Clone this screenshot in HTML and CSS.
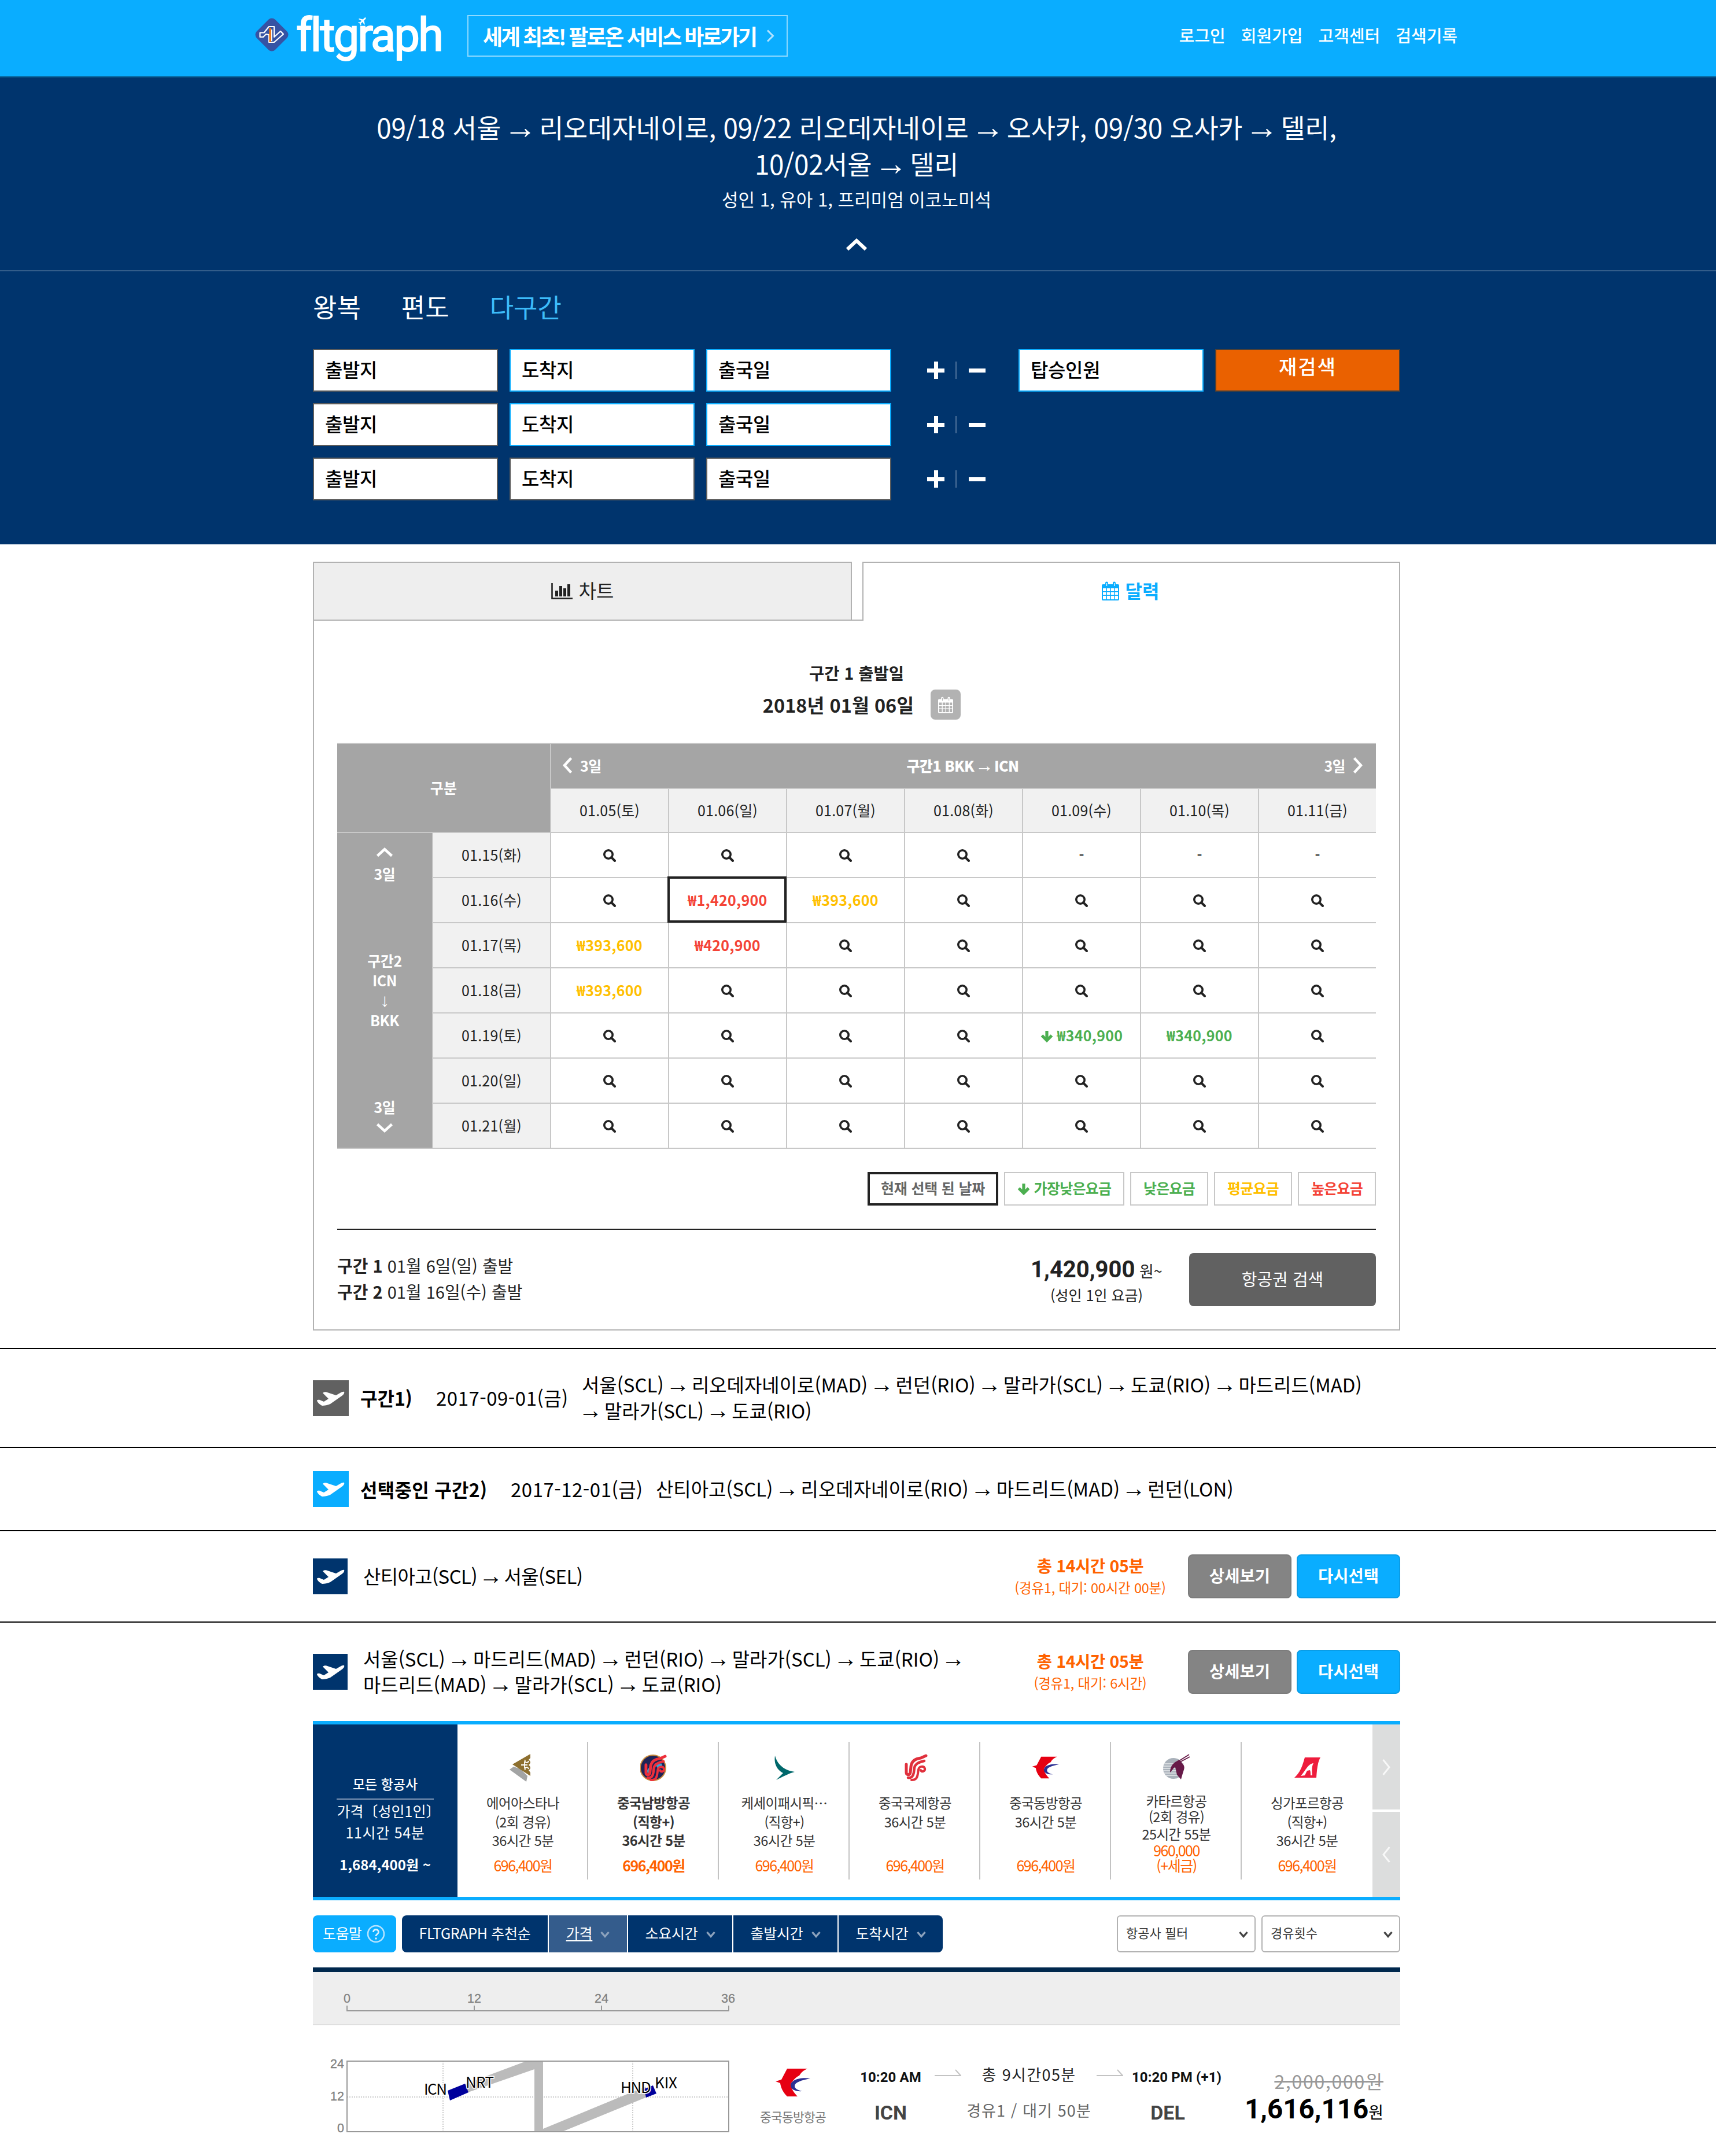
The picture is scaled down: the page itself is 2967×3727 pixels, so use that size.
FILE: index.html
```html
<!DOCTYPE html>
<html lang="ko">
<head>
<meta charset="utf-8">
<title>fltgraph</title>
<link rel="stylesheet" href="styles.css">
</head>
<body>
<svg class="defs" width="0" height="0">
  <symbol id="search" viewBox="0 0 22 22"><circle cx="9" cy="9" r="7.200" fill="none" stroke="currentColor" stroke-width="3.600"/><path d="M14 14l6 6" stroke="currentColor" stroke-width="4" stroke-linecap="round"/></symbol>
  <symbol id="chev" viewBox="0 0 30 18"><path d="M2.500 15.500L15 4l12.500 11.500" fill="none" stroke="currentColor" stroke-width="4.500"/></symbol>
  <symbol id="caret" viewBox="0 0 16 12"><path d="M1.500 2L8 9.500 14.500 2" fill="none" stroke="currentColor" stroke-width="3.400"/></symbol>
  <symbol id="down" viewBox="0 0 22 20"><path d="M11 0v15M2.500 8L11 16.500 19.500 8" fill="none" stroke="currentColor" stroke-width="5.200"/></symbol>
  <symbol id="cal" viewBox="0 0 30 33"><path fill="currentColor" fill-rule="evenodd" d="M2 5h4V3a2.500 2.500 0 0 1 5 0v2h8V3a2.500 2.500 0 0 1 5 0v2h4a2 2 0 0 1 2 2v24a2 2 0 0 1-2 2H2a2 2 0 0 1-2-2V7a2 2 0 0 1 2-2zM2 12v5h5.500v-5zM9 12v5h5.500v-5zM16 12v5h5.500v-5zM23 12v5h5v-5zM2 18.500v5h5.500v-5zM9 18.500v5h5.500v-5zM16 18.500v5h5.500v-5zM23 18.500v5h5v-5zM2 25v6h5.500v-6zM9 25v6h5.500v-6zM16 25v6h5.500v-6zM23 25v6h5v-6zM8 3v5h1.200V3zM21 3v5h1.200V3z"/></symbol>
  <symbol id="plane" viewBox="0 0 62 62"><path fill="#fff" d="M7 35c2-2 5-1 7 0l5 2 8-5-10-10c2-2 6-2 8-1l15 5 7-4c3-2 6-2.500 7-2 1 2-1 5-4 7L30 41c-4 2-10 3-14 3-4-2-8-5-9-9z"/></symbol>
  <symbol id="eastern" viewBox="0 0 60 50"><path fill="#e60012" d="M20 1h35c-7 3-11 7-14 12-5 2-12 9-15 15 1 8 6 15 12 21H20C12 41 9 33 8 26L0 23l10-3z"/><path fill="#2b2f92" d="M60 18c-16 3-27 7-27 13 0 4 4 7 13 9-11 1-20-3-20-10 0-9 16-15 34-12z"/></symbol>
  <symbol id="phoenix" viewBox="0 0 42 48"><g fill="none" stroke="currentColor" stroke-linecap="round"><path stroke-width="5" d="M5 18v14c0 5 6 5 7 0l1-10C14 12 22 8 30 7l9-4"/><path stroke-width="4.500" d="M8 41c7 1 9-3 10-9l1-8c1-7 7-10 17-12"/><path stroke-width="4" d="M14 45c8 0 10-4 11-11l1-7c1-6 9-7 11-2 1 5-5 7-7 3"/></g></symbol>
</svg>

<header class="top">
  <div class="top-in">
    <svg class="mark" viewBox="0 0 60 60"><rect x="7.500" y="7.500" width="45" height="45" rx="8" transform="rotate(45 30 30)" fill="#3653a4"/><path d="M9.500 26.500h7L25 16h9v18l11-10 5 5-16 14H25V30l-5-1-5 5H9.500zM29.500 21v20" fill="none" stroke="#fff" stroke-width="2.200" stroke-linejoin="round"/><path d="M27 18v25" stroke="#ef7008" stroke-width="3.200"/></svg>
    <div class="word">fltgraph<svg class="jet" viewBox="0 0 14 14"><path d="M13.500.5c-1-.5-2 0-3 1L8.500 3.500 2 2 1 3l5 3-2.500 2.500L1 8.300 0 9l3 1.500L4.500 14l1-1-.3-2.500L8 8l2.800 5 1-1L10.500 5.500l2-2c1-1 1.500-2 1-3z" fill="#fff"/></svg></div>
    <a class="follow"><span>세계 최초! 팔로온 서비스 바로가기</span><svg width="14" height="22" viewBox="0 0 14 22"><path d="M2 1.500L11.500 11 2 20.500" fill="none" stroke="#b5e3ff" stroke-width="3"/></svg></a>
    <nav><a>로그인</a><a>회원가입</a><a>고객센터</a><a>검색기록</a></nav>
  </div>
</header>

<section class="hero">
  <div class="summary">
    <h1>09/18 서울 <i class="to">→</i> 리오데자네이로, 09/22 리오데자네이로 <i class="to">→</i> 오사카, 09/30 오사카 <i class="to">→</i> 델리,<br>10/02서울 <i class="to">→</i> 델리</h1>
    <p>성인 1, 유아 1, 프리미엄 이코노미석</p>
    <svg class="fold" viewBox="0 0 38 24"><path d="M3 20L19 5l16 15" fill="none" stroke="#fff" stroke-width="6"/></svg>
  </div>
  <div class="wrap form">
    <div class="trip"><a>왕복</a><a>편도</a><a class="on">다구간</a></div>
    <div class="frow"><div class="field">출발지</div><div class="field blue">도착지</div><div class="field blue">출국일</div><div class="pm"><i class="plus"></i><i class="bar"></i><i class="minus"></i></div><div class="field blue">탑승인원</div><button class="again">재검색</button></div>
    <div class="frow"><div class="field">출발지</div><div class="field blue">도착지</div><div class="field blue">출국일</div><div class="pm"><i class="plus"></i><i class="bar"></i><i class="minus"></i></div></div>
    <div class="frow"><div class="field">출발지</div><div class="field">도착지</div><div class="field">출국일</div><div class="pm"><i class="plus"></i><i class="bar"></i><i class="minus"></i></div></div>
  </div>
</section>

<section class="wrap cal">
  <div class="tabs">
    <div class="tab"><svg width="37" height="28" viewBox="0 0 37 28"><path d="M1.500 0v26.500H37" fill="none" stroke="#222" stroke-width="2.600"/><path d="M7 13h5v10H7zM14 5h5v18h-5zM21 9h5v14h-5zM28 2h5v21h-5z" fill="#222"/></svg><span>차트</span></div>
    <div class="gap"></div>
    <div class="tab on"><svg width="30" height="33"><use href="#cal"/></svg><span>달력</span></div>
  </div>
  <div class="panel">
    <div class="seg">구간 1 출발일</div>
    <div class="date"><span>2018년 01월 06일</span><i class="calbtn"><svg width="26" height="29"><use href="#cal"/></svg></i></div>
    <table class="fares">
      <colgroup><col class="c1"><col class="c2"><col><col><col><col><col><col><col></colgroup>
      <tr class="h1"><th colspan="2" rowspan="2" class="g">구분</th><th colspan="7" class="g"><div class="range"><span><svg class="lt" width="30" height="18"><use href="#chev"/></svg>3일</span><b>구간1 BKK <i class="to">→</i> ICN</b><span>3일<svg class="rt" width="30" height="18"><use href="#chev"/></svg></span></div></th></tr>
      <tr class="h2"><th>01.05(토)</th><th>01.06(일)</th><th>01.07(월)</th><th>01.08(화)</th><th>01.09(수)</th><th>01.10(목)</th><th>01.11(금)</th></tr>
      <tr><th rowspan="7" class="g side"><div class="col"><div><svg width="30" height="18"><use href="#chev"/></svg>3일</div><div>구간2<br>ICN<br><i class="to">↓</i><br>BKK</div><div>3일<svg class="dn" width="30" height="18"><use href="#chev"/></svg></div></div></th><th>01.15(화)</th><td><svg><use href="#search"/></svg></td><td><svg><use href="#search"/></svg></td><td><svg><use href="#search"/></svg></td><td><svg><use href="#search"/></svg></td><td>-</td><td>-</td><td>-</td></tr>
      <tr><th>01.16(수)</th><td><svg><use href="#search"/></svg></td><td class="sel hi">₩1,420,900</td><td class="avg">₩393,600</td><td><svg><use href="#search"/></svg></td><td><svg><use href="#search"/></svg></td><td><svg><use href="#search"/></svg></td><td><svg><use href="#search"/></svg></td></tr>
      <tr><th>01.17(목)</th><td class="avg">₩393,600</td><td class="hi">₩420,900</td><td><svg><use href="#search"/></svg></td><td><svg><use href="#search"/></svg></td><td><svg><use href="#search"/></svg></td><td><svg><use href="#search"/></svg></td><td><svg><use href="#search"/></svg></td></tr>
      <tr><th>01.18(금)</th><td class="avg">₩393,600</td><td><svg><use href="#search"/></svg></td><td><svg><use href="#search"/></svg></td><td><svg><use href="#search"/></svg></td><td><svg><use href="#search"/></svg></td><td><svg><use href="#search"/></svg></td><td><svg><use href="#search"/></svg></td></tr>
      <tr><th>01.19(토)</th><td><svg><use href="#search"/></svg></td><td><svg><use href="#search"/></svg></td><td><svg><use href="#search"/></svg></td><td><svg><use href="#search"/></svg></td><td class="low"><svg class="ar"><use href="#down"/></svg>₩340,900</td><td class="low">₩340,900</td><td><svg><use href="#search"/></svg></td></tr>
      <tr><th>01.20(일)</th><td><svg><use href="#search"/></svg></td><td><svg><use href="#search"/></svg></td><td><svg><use href="#search"/></svg></td><td><svg><use href="#search"/></svg></td><td><svg><use href="#search"/></svg></td><td><svg><use href="#search"/></svg></td><td><svg><use href="#search"/></svg></td></tr>
      <tr><th>01.21(월)</th><td><svg><use href="#search"/></svg></td><td><svg><use href="#search"/></svg></td><td><svg><use href="#search"/></svg></td><td><svg><use href="#search"/></svg></td><td><svg><use href="#search"/></svg></td><td><svg><use href="#search"/></svg></td><td><svg><use href="#search"/></svg></td></tr>
    </table>
    <div class="legend"><span class="cur">현재 선택 된 날짜</span><span class="low lowest"><svg class="ar"><use href="#down"/></svg>가장낮은요금</span><span class="low">낮은요금</span><span class="avg">평균요금</span><span class="hi">높은요금</span></div>
    <div class="total">
      <div class="legs"><p><b>구간 1</b> 01월 6일(일) 출발</p><p><b>구간 2</b> 01월 16일(수) 출발</p></div>
      <div class="sum"><p><b>1,420,900</b> 원~</p><p class="per">(성인 1인 요금)</p></div>
      <button>항공권 검색</button>
    </div>
  </div>
</section>

<section class="band b1"><div class="wrap">
  <i class="pi gray"><svg><use href="#plane"/></svg></i><b class="n1">구간1)</b><span class="d1">2017-09-01(금)</span>
  <p>서울(SCL) <i class="to">→</i> 리오데자네이로(MAD) <i class="to">→</i> 런던(RIO) <i class="to">→</i> 말라가(SCL) <i class="to">→</i> 도쿄(RIO) <i class="to">→</i> 마드리드(MAD)<br><i class="to">→</i> 말라가(SCL) <i class="to">→</i> 도쿄(RIO)</p>
</div></section>
<section class="band b2"><div class="wrap">
  <i class="pi sky"><svg><use href="#plane"/></svg></i><b class="n2">선택중인 구간2)</b><span class="d2">2017-12-01(금)</span>
  <p>산티아고(SCL) <i class="to">→</i> 리오데자네이로(RIO) <i class="to">→</i> 마드리드(MAD) <i class="to">→</i> 런던(LON)</p>
</div></section>
<section class="band b3"><div class="wrap">
  <i class="pi navy"><svg><use href="#plane"/></svg></i>
  <p>산티아고(SCL) <i class="to">→</i> 서울(SEL)</p>
  <div class="dur"><b>총 14시간 05분</b><span>(경유1, 대기: 00시간 00분)</span></div>
  <button class="more">상세보기</button><button class="pick">다시선택</button>
</div></section>
<section class="band b4"><div class="wrap">
  <i class="pi navy"><svg><use href="#plane"/></svg></i>
  <p>서울(SCL) <i class="to">→</i> 마드리드(MAD) <i class="to">→</i> 런던(RIO) <i class="to">→</i> 말라가(SCL) <i class="to">→</i> 도쿄(RIO) <i class="to">→</i><br>마드리드(MAD) <i class="to">→</i> 말라가(SCL) <i class="to">→</i> 도쿄(RIO)</p>
  <div class="dur"><b>총 14시간 05분</b><span>(경유1, 대기: 6시간)</span></div>
  <button class="more">상세보기</button><button class="pick">다시선택</button>
</div></section>

<section class="wrap strip">
  <div class="all"><span class="a1">모든 항공사</span><span class="a2">가격〔성인1인<i>〕</i></span><span class="a3">11시간 54분</span><b>1,684,400원 ~</b></div>
  <div class="card"><svg class="lg" viewBox="0 0 46 48"><path fill="#a3a4a4" d="M0 27l7-5 12 4 12 12-2 10z"/><path fill="#8d6f2f" d="M36 0v7l-3 3c4 3 4 6 0 9 4 3 4 7 0 9l3 4v6L5 18z"/><path d="M20 19h11M27 10c-2 6 5 6 6 2M27 28c-2-6 5-6 6-2M26 13v12" fill="none" stroke="#fff" stroke-width="1.800"/></svg><span>에어아스타나</span><span>(2회 경유)</span><span>36시간 5분</span><em>696,400원</em></div>
  <div class="card bold"><svg class="lg" viewBox="0 0 46 48"><circle cx="22" cy="24" r="22" fill="#1d2356" stroke="#c98a3c" stroke-width="2"/><path d="M12 32l6-8M25 19h12l-8 4" stroke="#35a3da" stroke-width="5"/><svg x="5" y="1" width="41" height="47" color="#ee2f3b"><use href="#phoenix"/></svg></svg><span>중국남방항공</span><span>(직항+)</span><span>36시간 5분</span><em>696,400원</em></div>
  <div class="card"><svg class="lg" viewBox="0 0 46 48"><path fill="#00686b" d="M7 3c4 15 15 25 34 28-11 3-20 8-32 14l12-12C9 27 5 15 7 3z"/></svg><span>케세이패시픽⋯</span><span>(직항+)</span><span>36시간 5분</span><em>696,400원</em></div>
  <div class="card"><svg class="lg" viewBox="0 0 46 48" color="#e0303c"><use href="#phoenix" x="3" width="42" height="48"/></svg><span>중국국제항공</span><span>36시간 5분</span><em>696,400원</em></div>
  <div class="card"><svg class="lg" viewBox="0 0 46 48"><use href="#eastern" x="-1" y="4" width="48" height="39"/></svg><span>중국동방항공</span><span>36시간 5분</span><em>696,400원</em></div>
  <div class="card tight"><svg class="lg" viewBox="0 0 46 48"><circle cx="18" cy="25" r="18" fill="#a9b1ba"/><path d="M2 17h34M0 21h36M0 25h36M0 29h36M2 33h32M5 37h28" stroke="#e6e9ec" stroke-width="1.500"/><path fill="#671a48" d="M21 14l7-4 5 6c5 5 4 9 2 14l-4 14-7-8-3-13c-3 0-5 6-9 9 0-6 2-13 9-18z"/><path d="M26 13L45 1M29 14L46 5" stroke="#671a48" stroke-width="1.800"/></svg><span class="name">카타르항공</span><span>(2회 경유)</span><span>25시간 55분</span><em>960,000<br>(+세금)</em></div>
  <div class="card"><svg class="lg" viewBox="0 0 46 48"><path fill="#ee1c3c" d="M1 41c9-8 13-17 18-35h27c-5 9-6 21-7 35z"/><path fill="#fff" d="M12 38c8-8 12-21 22-22-3 5-3 13-2 21h-3c0-4 0-7-1-9l-5 1-4 8z"/></svg><span>싱가포르항공</span><span>(직항+)</span><span>36시간 5분</span><em>696,400원</em></div>
  <div class="arrows"><i><svg viewBox="0 0 14 28"><path d="M1.500 1L12 14 1.500 27" fill="none" stroke="#fff" stroke-width="3"/></svg></i><i><svg viewBox="0 0 14 28"><path d="M12.500 1L2 14l10.500 13" fill="none" stroke="#fff" stroke-width="3"/></svg></i></div>
</section>

<section class="wrap tools">
  <a class="help">도움말<svg width="32" height="32" viewBox="0 0 32 32"><circle cx="16" cy="16" r="14" fill="none" stroke="#b5e3ff" stroke-width="2.600"/><path d="M11.500 13c0-6 9-6 9 0 0 3-4.500 3.500-4.500 7" fill="none" stroke="#d8f0ff" stroke-width="2.800"/><circle cx="16" cy="24" r="1.800" fill="#d8f0ff"/></svg></a>
  <div class="sorts"><a class="s0">FLTGRAPH 추천순</a><a class="s1"><u>가격</u><svg><use href="#caret"/></svg></a><a>소요시간<svg><use href="#caret"/></svg></a><a>출발시간<svg><use href="#caret"/></svg></a><a class="s4">도착시간<svg><use href="#caret"/></svg></a></div>
  <div class="select">항공사 필터<svg><use href="#caret"/></svg></div>
  <div class="select">경유횟수<svg><use href="#caret"/></svg></div>
</section>

<section class="wrap axis">
  <svg width="800" height="90" viewBox="0 0 800 90"><path d="M59 58v9h660v-9M279 58v9M499 58v9" fill="none" stroke="#999" stroke-width="2"/><g class="num" text-anchor="middle"><text x="59" y="53">0</text><text x="279" y="53">12</text><text x="499" y="53">24</text><text x="718" y="53">36</text></g></svg>
</section>

<section class="wrap result">
  <svg class="graph" width="760" height="140" viewBox="0 0 760 140"><g class="num" text-anchor="end"><text x="54" y="21">24</text><text x="54" y="77">12</text><text x="54" y="132">0</text></g><path d="M225 9v122M553 9v122M59 71h660" stroke="#ccc" stroke-width="2" stroke-dasharray="2 2"/><path fill="#bbb" d="M262 49L369 9h29v117l177-73 5 17-149 61h-48V23L268 63z"/><path fill="#00009c" d="M233 60l30-12 6 15-32 14zM573 57l15-6 6 14-18 7z"/><rect x="59" y="9" width="660" height="122" fill="none" stroke="#999" stroke-width="2"/><g class="port"><text x="192" y="67" textLength="40">ICN</text><text x="264" y="55" textLength="49">NRT</text><text x="532" y="64" textLength="53">HND</text><text x="591" y="56" textLength="39">KIX</text></g></svg>
  <div class="air"><svg width="60" height="50"><use href="#eastern"/></svg><span>중국동방항공</span></div>
  <div class="stop s-l"><b>10:20 AM</b><strong>ICN</strong></div>
  <svg class="go" viewBox="0 0 46 14"><path d="M0 12h45L36 2" fill="none" stroke="#c3c3c3" stroke-width="2"/></svg>
  <div class="stop s-m"><span>총 9시간05분</span><span class="via">경유1 / 대기 50분</span></div>
  <svg class="go" viewBox="0 0 46 14"><path d="M0 12h45L36 2" fill="none" stroke="#c3c3c3" stroke-width="2"/></svg>
  <div class="stop s-r"><b>10:20 PM (+1)</b><strong>DEL</strong></div>
  <div class="price"><s>2,000,000원</s><p><b>1,616,116</b>원</p></div>
</section>
</body>
</html>
```
FILE: styles.css
```css
* { box-sizing: border-box; margin: 0; padding: 0; }
body { font-family: "Noto Sans CJK KR", sans-serif; color: #222; background: #fff; height: 3727px; overflow: hidden; font-size: 26px; white-space: nowrap; }
svg { display: block; flex: none; }
i, em { font-style: normal; }
button { border: 0; font-family: inherit; white-space: nowrap; }
.defs { position: absolute; }
.wrap { width: 1880px; margin-left: 541px; }
.to { font-family: "Liberation Serif", serif; font-size: 1.250em; font-weight: 400; line-height: 0; margin: 0 -.140em; }

/* header */
.top { height: 134px; background: #0aadff; border-bottom: 2px solid #07588a; }
.top-in { margin-left: 440px; width: 2080px; height: 132px; display: flex; align-items: flex-start; }
.mark { width: 60px; height: 60px; margin-top: 30px; }
.word { position: relative; width: 308px; padding-left: 12px; font: 400 79px/92px Roboto, sans-serif; letter-spacing: -2.600px; color: #fff; margin-top: 15px; -webkit-text-stroke: 2px #fff; }
.jet { position: absolute; left: 119px; top: 15px; width: 14px; height: 14px; }
.follow { width: 554px; height: 72px; margin-top: 26px; border: 2px solid #8edaff; color: #fff; display: flex; align-items: center; justify-content: space-between; padding: 0 21px 0 25px; }
.follow span { font-weight: 700; font-size: 37px; letter-spacing: -3.150px; line-height: 68px; }
.top nav { margin-left: auto; display: flex; gap: 27px; color: #fff; font-weight: 500; font-size: 29px; letter-spacing: 0; line-height: 120px; }

/* search summary and form */
.hero { background: #00346d; color: #fff; height: 807px; }
.summary { height: 335px; border-bottom: 2px solid #335d8a; padding-top: 54px; width: 100%; display: flex; flex-direction: column; align-items: center; padding-right: 5px; }
h1 { font-weight: 400; font-size: 45.800px; line-height: 63px; letter-spacing: -.250px; text-align: center; }
.summary p { font-size: 31px; line-height: 60px; margin-bottom: 37px; }
.fold { width: 38px; height: 24px; }
.form { padding-top: 28px; }
.trip { display: flex; gap: 70px; font-size: 45px; line-height: 66px; height: 106px; }
.trip .on { color: #3cbcfb; }
.frow { display: flex; height: 74px; margin-bottom: 20px; }
.field { width: 320px; height: 74px; background: #fff; border: 2px solid #5b5b5b; color: #000; font-weight: 500; font-size: 33px; line-height: 66px; letter-spacing: -.300px; padding-left: 19px; margin-right: 20px; }
.field.blue { border-color: #0aadff; }
.pm { display: flex; align-items: center; width: 160px; margin-left: 42px; margin-right: -2px; }
.plus { width: 30px; height: 30px; background: linear-gradient(#fff, #fff) center / 7px 30px no-repeat, linear-gradient(#fff, #fff) center / 30px 7px no-repeat; }
.bar { width: 2px; height: 30px; background: #4d719a; margin: 0 21px 0 19px; }
.minus { width: 29px; height: 7px; background: #fff; }
.again { width: 320px; height: 74px; background: #ea6100; border: 2px solid #4c4037; color: #fff; font-weight: 500; font-size: 34px; letter-spacing: 2px; line-height: 50px; padding-bottom: 15px; }

/* calendar panel */
.cal { padding-top: 30px; height: 1389px; }
.tabs { display: flex; height: 102px; }
.tab { width: 932px; border: 2px solid #b2b2b2; background: #eee; display: flex; align-items: center; justify-content: center; gap: 11px; font-size: 33px; line-height: 1; }
.tab span { margin-top: -3px; }
.gap { width: 18px; border-bottom: 2px solid #b2b2b2; }
.tab.on { width: 930px; background: #fff; border-bottom: 0; color: #0aadff; font-weight: 700; font-size: 32px; padding-bottom: 3px; padding-right: 3px; }
.panel { height: 1227px; border: 2px solid #b2b2b2; border-top: 0; padding: 65px 40px 0; }
.seg { text-align: center; font-weight: 700; font-size: 28.500px; line-height: 50px; color: #222; }
.date { display: flex; justify-content: center; align-items: center; gap: 29px; font-weight: 700; font-size: 32.500px; line-height: 54px; padding-left: 18px; margin-top: 2px; height: 56px; }
.date span { margin-top: -1px; }
.calbtn { width: 52px; height: 52px; border-radius: 8px; background: #b2b2b2; color: #fff; display: flex; align-items: center; justify-content: center; }
.fares { width: 1796px; margin-top: 38px; table-layout: fixed; border-collapse: separate; border-spacing: 0; border-bottom: 2px solid #c8c8c8; letter-spacing: .200px; font-size: 25px; line-height: 36px; }
.c1 { width: 164px; } .c2 { width: 204px; }
.fares th, .fares td { border-top: 2px solid #c8c8c8; border-left: 2px solid #c8c8c8; text-align: center; vertical-align: middle; font-weight: 400; height: 78px; padding-bottom: 3px; }
.fares th { background: #f1f1f1; }
.fares .h2 th { height: 76px; }
.fares .g { background: #a5a5a5; color: #fff; font-weight: 700; }
.fares tr > .g:first-child { border-left: 0; }
.fares td { font-weight: 500; }
.fares td svg { width: 22px; height: 22px; margin: 4px auto 0; }
.fares td .ar, .legend .ar { display: inline-block; width: 22px; height: 20px; margin: 0 7px -2px 0; }
.fares .hi, .fares .avg, .fares .low { font-weight: 700; letter-spacing: .300px; }
.hi { color: #f44336; } .avg { color: #ffbf00; } .low { color: #4caf50; }
.fares .sel { outline: 4px solid #222; outline-offset: -3px; }
.range { display: flex; justify-content: space-between; align-items: center; padding: 0 16px; letter-spacing: -.600px; }
.range span { display: flex; align-items: center; gap: 7px; }
.range span:first-child { margin-left: -3px; }
.lt { transform: rotate(-90deg); } .rt { transform: rotate(90deg); }
.fares .side { padding: 0; }
.col { height: 540px; display: flex; flex-direction: column; justify-content: space-between; align-items: center; line-height: 34.500px; padding: 22px 0 23px; letter-spacing: -.400px; }
.col > div { display: flex; flex-direction: column; align-items: center; gap: 11px; }
.col > div:nth-child(2) { display: block; }
.dn { transform: rotate(180deg); }
.legend { display: flex; justify-content: flex-end; gap: 10px; margin-top: 40px; font-weight: 700; font-size: 25px; letter-spacing: -.700px; }
.legend span { border: 2px solid #c8c8c8; height: 58px; line-height: 51px; width: 135px; text-align: center; }
.legend .cur { border: 4px solid #222; width: 226px; line-height: 47px; color: #666; letter-spacing: -.200px; }
.legend .lowest { width: 208px; }
.total { display: flex; margin-top: 40px; border-top: 2px solid #222; padding-top: 40px; font-size: 29px; }
.legs { width: 1188px; line-height: 45px; margin-top: -1px; }
.sum { width: 250px; margin-right: 35px; text-align: center; font-size: 27px; line-height: 45px; margin-top: 6px; }
.sum b { font: 700 40px/45px Roboto, sans-serif; }
.sum .per { font-size: 25px; line-height: 44px; margin-top: -3px; }
.total button { width: 323px; height: 92px; background: #616161; border-radius: 8px; color: #fff; font-size: 29px; line-height: 86px; padding-bottom: 4px; }

/* selected legs */
.band { border-top: 2px solid #000; color: #000; font-size: 33px; line-height: 45px; }
.band .wrap { display: flex; align-items: center; height: 100%; }
.band p { margin-top: -2px; }
.b1 { height: 171px; } .b2 { height: 144px; } .b3 { height: 158px; } .b4 { height: 172px; }
.pi { width: 62px; height: 62px; display: block; flex: none; }
.pi svg { width: 62px; height: 62px; }
.gray { background: #616161; } .sky { background: #0aadff; } .navy { background: #00346d; width: 60px; margin-right: 27px; }
.n1, .n2 { margin-left: 20px; width: 131px; font-size: 32px; } .n2 { width: 260px; letter-spacing: .300px; }
.d1, .d2 { width: 252px; letter-spacing: .500px; } .d2 { width: 251px; }
.b3 p { letter-spacing: -.600px; }
.b4 p { line-height: 44.500px; }
.band .dur { margin-left: auto; width: 270px; margin-right: 34px; display: flex; flex-direction: column; align-items: center; color: #ff6200; }
.dur b { font-size: 28.500px; line-height: 39px; letter-spacing: -.350px; } .dur span { font-size: 23.500px; line-height: 39px; letter-spacing: -.200px; }
.band button { width: 179px; height: 76px; border-radius: 8px; color: #fff; font-weight: 700; font-size: 28.500px; line-height: 66px; border: 2px solid #7c7c7c; background: #848484; padding-bottom: 4px; }
.band .pick { background: #0aadff; border-color: #0a9de6; margin-left: 9px; }

/* airline strip */
.strip { height: 310px; border-top: 6px solid #0aadff; border-bottom: 6px solid #0aadff; display: flex; }
.all { width: 250px; background: #00346d; color: #fff; display: flex; flex-direction: column; align-items: center; padding-top: 80px; font-size: 25px; line-height: 37px; }
.a1 { font-size: 23px; font-weight: 500; line-height: 44px; height: 50px; width: 168px; text-align: center; border-bottom: 2px solid #8096b4; }
.a2 i { margin-right: -12px; } .a2 { margin-top: 1px; } .a3 { letter-spacing: .700px; }
.all b { font-size: 24px; margin-top: 18px; }
.card { position: relative; width: 226px; height: 298px; padding: 51px 0 42px; display: flex; flex-direction: column; align-items: center; color: #333; font-size: 23.500px; letter-spacing: -.600px; line-height: 32.500px; }
.card:not(:nth-child(8))::after { content: ""; position: absolute; right: 0; top: 30px; width: 2px; height: 238px; background: #c3c3c3; }
.lg { width: 46px; height: 48px; margin-bottom: 20px; }
.card em { margin-top: auto; color: #ff6200; font-size: 25px; letter-spacing: -1.500px; line-height: 26px; text-align: center; }
.card.bold { font-weight: 700; }
.tight .lg { margin-bottom: 22px; }
.tight span { line-height: 30px; }
.tight .name { line-height: 23px; }
.arrows { width: 48px; display: grid; gap: 4px; }
.arrows i { background: #dcdddd; display: flex; align-items: center; justify-content: center; }
.arrows svg { width: 14px; height: 28px; opacity: .8; }

/* sort bar */
.tools { display: flex; margin-top: 26px; height: 64px; font-size: 25px; line-height: 60px; color: #fff; }
.tools > *, .sorts a { display: flex; align-items: flex-start; }
.help { width: 144px; background: #0aadff; border-radius: 8px; padding-left: 17px; gap: 9px; letter-spacing: -.600px; margin-right: 10px; }
.help svg { margin-top: 16px; }
.sorts { gap: 2px; margin-right: auto; }
.sorts a { background: #00346d; width: 180px; height: 64px; justify-content: center; gap: 14px; letter-spacing: -.200px; }
.sorts svg { width: 16px; height: 12px; margin-top: 27px; color: #8ca2bd; }
.sorts .s0 { width: 252px; border-radius: 8px 0 0 8px; letter-spacing: -.300px; } .sorts .s1 { width: 135px; background: #345c8c; } .sorts .s4 { border-radius: 0 8px 8px 0; }
.select { width: 240px; border: 2px solid #b2b2b2; border-radius: 6px; margin-left: 10px; color: #333; font-size: 22px; line-height: 54px; justify-content: space-between; padding: 0 11px 0 14px; }
.select svg { width: 16px; height: 12px; margin-top: 25px; color: #444; }

/* result graph */
.axis { margin-top: 26px; height: 100px; border-top: 8px solid #00284d; border-bottom: 2px solid #dfdfdf; background: #eee; }
.num { font: 21.500px "Liberation Sans", sans-serif; fill: #808080; stroke: #808080; stroke-width: .300px; }
.port { font-size: 26px; fill: #000; paint-order: stroke; stroke: #fff; stroke-width: 3px; }
.result { display: flex; padding-top: 53px; }
.air { width: 122px; margin-left: 9px; padding-top: 21px; display: flex; flex-direction: column; align-items: center; color: #777; font-size: 21.500px; letter-spacing: -.800px; line-height: 68px; }
.stop { display: flex; flex-direction: column; align-items: center; flex: none; }
.stop b { font: 700 24px/34px Roboto, sans-serif; letter-spacing: .100px; margin-top: 20px; height: 34px; color: #111; }
.stop strong { font: 700 34px/40px Roboto, sans-serif; color: #444; margin-top: 24px; }
.s-l { width: 140px; margin-left: 38px; margin-right: 6px; }
.s-m { width: 234px; font-size: 27px; letter-spacing: 1.400px; line-height: 50px; padding-top: 7px; }
.via { color: #666; margin-top: 12px; letter-spacing: 1.100px; }
.go { width: 46px; height: 14px; margin-top: 22px; flex: none; }
.s-r { width: 185px; }
.s-r strong { margin-right: 31px; }
.price { width: 265px; text-align: right; padding-top: 18px; flex: none; color: #999; font-size: 32px; letter-spacing: 1.700px; line-height: 50px; }
.price s { display: block; }
.price p { color: #000; font-size: 28px; letter-spacing: 0; line-height: 48px; }
.price p b { font: 700 47.500px/48px Roboto, sans-serif; }
```
